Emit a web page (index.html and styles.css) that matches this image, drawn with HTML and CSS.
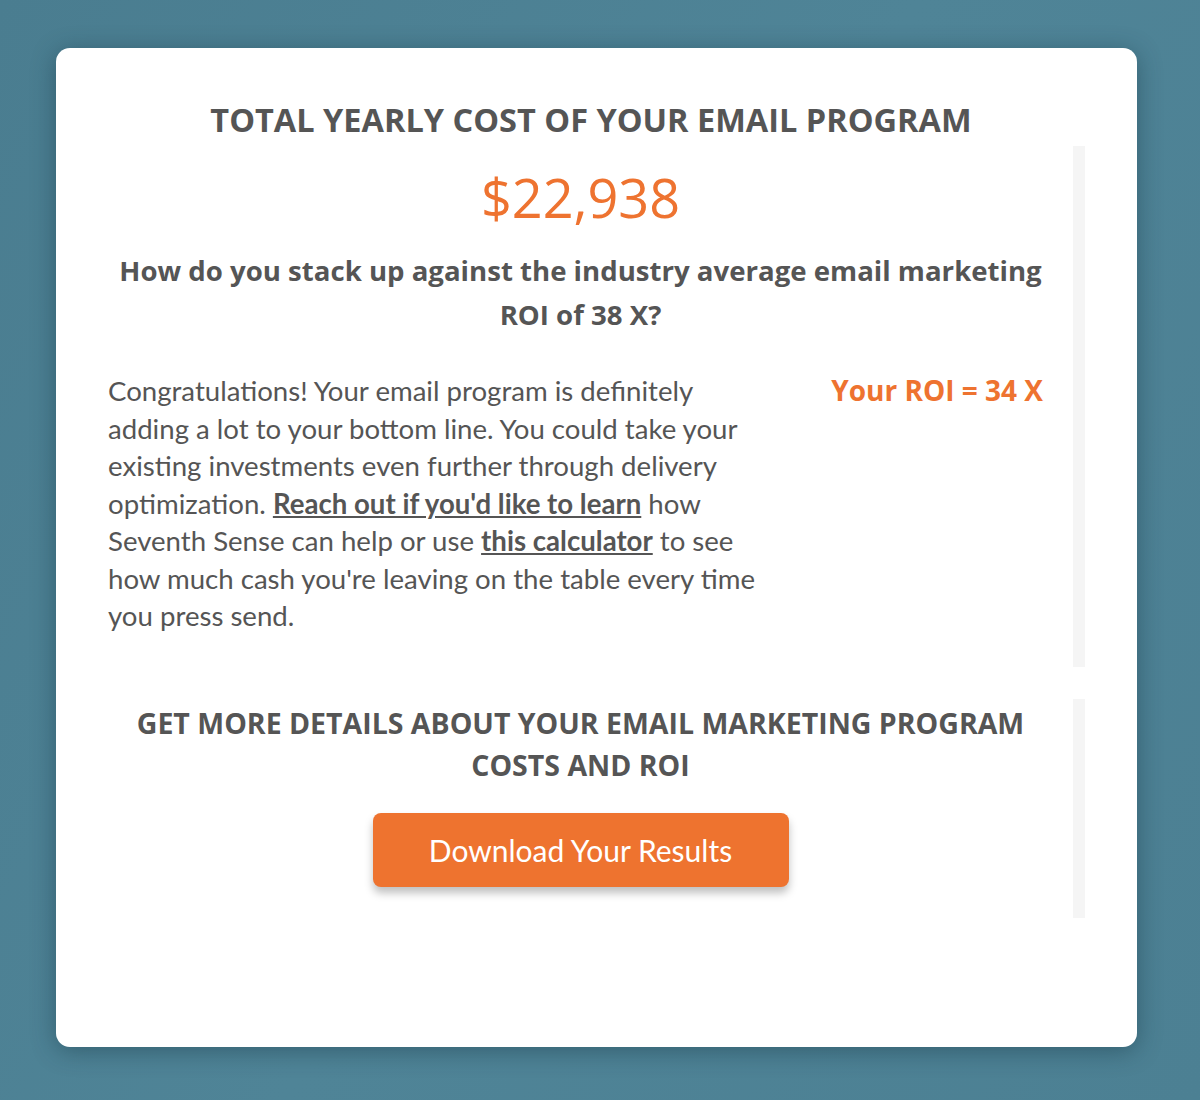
FILE: index.html
```html
<!DOCTYPE html>
<html lang="en">
<head>
    <meta charset="UTF-8">
    <meta name="viewport" content="width=device-width, initial-scale=1.0">
    <title>Email ROI Results</title>
    <link rel="stylesheet" href="styles.css">
</head>
<body>
    <div class="card">
        <h2 class="title">TOTAL YEARLY COST OF YOUR EMAIL PROGRAM</h2>

        <div class="section">
            <div class="section-main">
                <div class="price">$22,938</div>
                <h3 class="question">How do you stack up against the industry average email marketing ROI of 38 X?</h3>
                <div class="result">
                    <p class="result-text">
                        Congratulations! Your email program is definitely adding a lot to your bottom line. You could take your existing investments even further through delivery optimization. <a href="#">Reach out if you'd like to learn</a> how Seventh Sense can help or use <a href="#">this calculator</a> to see how much cash you're leaving on the table every time you press send.
                    </p>
                    <div class="roi">Your ROI = 34 X</div>
                </div>
            </div>
            <div class="side-bar"></div>
        </div>

        <div class="section section-cta">
            <div class="section-main">
                <h2 class="cta-title">GET MORE DETAILS ABOUT YOUR EMAIL MARKETING PROGRAM COSTS AND ROI</h2>
                <button class="download-btn">Download Your Results</button>
            </div>
            <div class="side-bar"></div>
        </div>
    </div>
</body>
</html>
```

FILE: styles.css
```css
body {
    margin: 0;
    padding: 48px 63px 0 56px;
    min-height: 1100px;
    box-sizing: border-box;
    background: linear-gradient(120deg, #4a7d90, #4f8497 50%, #4c8093);
    font-family: 'Lato', 'Open Sans', sans-serif;
    color: #555;
}

.card {
    background-color: #fff;
    border-radius: 14px;
    box-shadow: 0 4px 24px rgba(20, 50, 65, 0.45);
    padding: 52px 52px 129px 52px;
}

.title {
    margin: 0;
    font-family: 'Open Sans', sans-serif;
    font-size: 32.5px;
    line-height: 40px;
    font-weight: 700;
    text-align: center;
    color: #555;
    padding-right: 11px;
}

.section {
    display: flex;
    gap: 20px;
    margin-top: 6px;
}

.section-main {
    flex: 1;
    padding: 16px 0 32px 0;
}

.side-bar {
    width: 12px;
    background-color: #f5f5f5;
}

.price {
    text-align: center;
    font-family: 'Open Sans', sans-serif;
    font-size: 54px;
    line-height: 70px;
    color: #ee7330;
}

.question {
    margin: 16px 0 0 0;
    font-family: 'Open Sans', sans-serif;
    font-size: 27.6px;
    line-height: 44px;
    font-weight: 700;
    text-align: center;
    color: #555;
}

.result {
    display: flex;
    justify-content: space-between;
    margin-top: 36px;
}

.result-text {
    margin: 0;
    width: 660px;
    font-size: 27.6px;
    line-height: 37.5px;
    color: #555;
}

.result-text a {
    color: #555;
    font-weight: 700;
    text-decoration: underline;
}

.roi {
    font-family: 'Open Sans', sans-serif;
    font-size: 28px;
    line-height: 37.5px;
    font-weight: 700;
    color: #ee7330;
    margin-right: 10px;
}

.section-cta {
    margin-top: 32px;
}

.section-cta .section-main {
    padding: 3px 0 31px 0;
    text-align: center;
}

.cta-title {
    margin: 0;
    font-family: 'Open Sans', sans-serif;
    font-size: 28.5px;
    line-height: 42px;
    font-weight: 700;
    color: #555;
}

.download-btn {
    margin-top: 27px;
    width: 416px;
    height: 74px;
    border: none;
    border-radius: 8px;
    background-color: #ee732f;
    color: #fff;
    font-family: 'Lato', sans-serif;
    font-size: 30px;
    box-shadow: 0 6px 8px rgba(0, 0, 0, 0.25);
    cursor: pointer;
}
```
